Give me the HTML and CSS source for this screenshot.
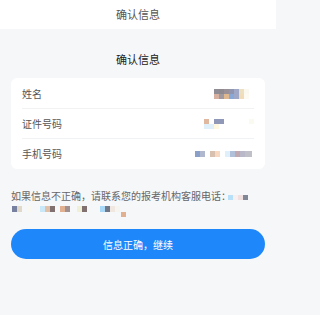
FILE: index.html
```html
<!DOCTYPE html>
<html lang="zh-CN">
<head>
<meta charset="utf-8">
<title>确认信息</title>
<link rel="stylesheet" href="styles.css">
</head>
<body>
<header class="topbar">确认信息</header>
<main class="page">
  <h1 class="title">确认信息</h1>
  <section class="card">
    <div class="row">
      <span class="label">姓名</span>
      <svg class="mask" width="40" height="10" viewBox="0 0 40 10">
        <rect x="0" y="0" width="5" height="5" fill="#8f8d93"/>
        <rect x="5" y="0" width="5" height="5" fill="#8f8a90"/>
        <rect x="10" y="0" width="5" height="5" fill="#9a9098"/>
        <rect x="15" y="0" width="5" height="5" fill="#9096b0"/>
        <rect x="20" y="0" width="5" height="5" fill="#a0a8c8"/>
        <rect x="25" y="0" width="5" height="5" fill="#ece0c0"/>
        <rect x="30" y="0" width="5" height="5" fill="#fbf8f0"/>
        <rect x="0" y="5" width="5" height="5" fill="#d8b0a0"/>
        <rect x="5" y="5" width="5" height="5" fill="#a09aa0"/>
        <rect x="10" y="5" width="5" height="5" fill="#e0b890"/>
        <rect x="15" y="5" width="5" height="5" fill="#88a8d8"/>
        <rect x="20" y="5" width="5" height="5" fill="#a0a8c8"/>
        <rect x="25" y="5" width="5" height="5" fill="#f0dcb8"/>
        <rect x="30" y="5" width="5" height="5" fill="#fdfaf2"/>
      </svg>
    </div>
    <div class="row">
      <span class="label">证件号码</span>
      <svg class="mask" width="50" height="10" viewBox="0 0 50 10">
        <rect x="0" y="0" width="5" height="5" fill="#e0b8a0"/>
        <rect x="10" y="0" width="10" height="5" fill="#9098b8"/>
        <rect x="45" y="0" width="5" height="5" fill="#fbfaf0"/>
        <rect x="0" y="5" width="10" height="5" fill="#e0f0fb"/>
        <rect x="10" y="5" width="5" height="5" fill="#fff8e0"/>
      </svg>
    </div>
    <div class="row">
      <span class="label">手机号码</span>
      <svg class="mask" width="59" height="6" viewBox="0 0 59 6">
        <rect x="0" y="0" width="5" height="6" fill="#8aa0c8"/>
        <rect x="5" y="0" width="5" height="6" fill="#b0b8d0"/>
        <rect x="15" y="0" width="5" height="6" fill="#d8c0b0"/>
        <rect x="20" y="0" width="5" height="6" fill="#f8d8c0"/>
        <rect x="30" y="0" width="5" height="6" fill="#e0f0fb"/>
        <rect x="35" y="0" width="5" height="6" fill="#b0c0d8"/>
        <rect x="40" y="0" width="5" height="6" fill="#c0a8b0"/>
        <rect x="45" y="0" width="5" height="6" fill="#b8b8c8"/>
        <rect x="50" y="0" width="7" height="6" fill="#c0c0c8"/>
      </svg>
    </div>
  </section>
  <div class="hint">
    <p class="hint-line">如果信息不正确，请联系您的报考机构客服电话：<svg class="phone-a" width="20" height="5" viewBox="0 0 20 5">
        <rect x="0" y="0" width="5" height="5" fill="#b8e0f8"/>
        <rect x="5" y="0" width="5" height="5" fill="#f8f0f0"/>
        <rect x="10" y="0" width="5" height="5" fill="#f0e0e0"/>
        <rect x="15" y="0" width="5" height="5" fill="#808898"/>
      </svg></p>
    <p class="hint-line"><svg class="phone-b" width="115" height="11" viewBox="0 0 115 11">
        <rect x="0" y="0" width="5" height="6" fill="#7880a0"/>
        <rect x="5" y="0" width="5" height="6" fill="#e0d8c8"/>
        <rect x="15" y="0" width="5" height="6" fill="#f8f8f0"/>
        <rect x="28" y="0" width="5" height="6" fill="#c8e8f8"/>
        <rect x="33" y="0" width="5" height="6" fill="#e0c0a8"/>
        <rect x="38" y="0" width="5" height="6" fill="#807070"/>
        <rect x="48" y="0" width="5" height="6" fill="#e0b090"/>
        <rect x="53" y="0" width="5" height="6" fill="#a09090"/>
        <rect x="65" y="0" width="5" height="6" fill="#f0f0d8"/>
        <rect x="70" y="0" width="5" height="6" fill="#807070"/>
        <rect x="88" y="0" width="5" height="6" fill="#a8d8f8"/>
        <rect x="93" y="0" width="5" height="6" fill="#707888"/>
        <rect x="98" y="0" width="5" height="6" fill="#f0e8e0"/>
        <rect x="103" y="0" width="5" height="6" fill="#f6f4ee"/>
        <rect x="109" y="6" width="5" height="5" fill="#e0b090"/>
      </svg></p>
  </div>
  <button class="confirm" type="button">信息正确，继续</button>
</main>
</body>
</html>
```
FILE: styles.css
```css
html, body {
  margin: 0;
  padding: 0;
}
html {
  background: #f6f7f9;
}
body {
  width: 276px;
  min-height: 315px;
  background: #f6f7f9;
  font-family: "Noto Sans CJK SC", "Noto Sans", sans-serif;
  color: #333;
}
.topbar {
  height: 29px;
  line-height: 29px;
  background: #ffffff;
  text-align: center;
  font-size: 11px;
  color: #555;
}
.page {
  display: flex;
  flex-direction: column;
}
.title {
  margin: 22px 0 11px;
  height: 16px;
  line-height: 16px;
  text-align: center;
  font-size: 11px;
  font-weight: 400;
  color: #222;
}
.card {
  margin: 0 11px;
  padding: 1px 11px;
  background: #ffffff;
  border-radius: 6px;
}
.row {
  height: 29px;
  display: flex;
  align-items: center;
  justify-content: space-between;
  border-bottom: 1px solid #f1f2f4;
}
.row:last-child {
  border-bottom: none;
}
.label {
  font-size: 10px;
  color: #555;
}
.mask {
  display: block;
}
.hint {
  margin: 20px 11px 0;
  font-size: 10px;
  line-height: 14px;
  color: #666;
}
.hint-line {
  margin: 0;
  height: 14px;
  white-space: nowrap;
}
.phone-a {
  display: inline-block;
  vertical-align: middle;
  margin-left: -3px;
}
.phone-b {
  display: block;
  margin: 3px 0 0 1px;
}
.confirm {
  margin: 9px 11px 0;
  height: 30px;
  border: none;
  border-radius: 15px;
  background: #1e88fa;
  color: #ffffff;
  font-family: "Noto Sans CJK SC", "Noto Sans", sans-serif;
  font-size: 10px;
  padding: 0;
}
```
